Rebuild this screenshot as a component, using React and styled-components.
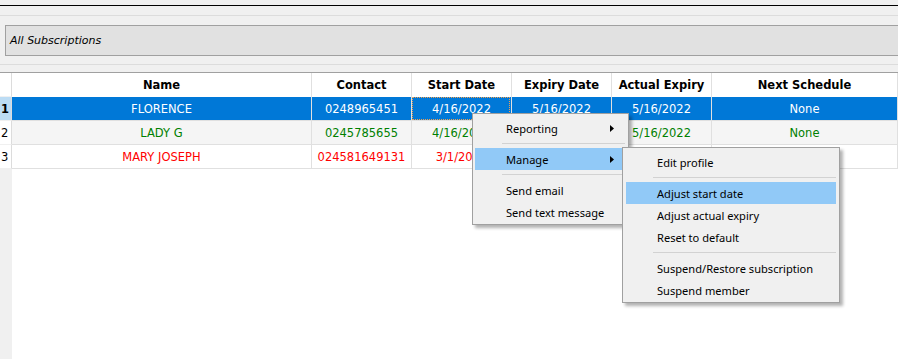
import React from "react";
import styled, { createGlobalStyle, css } from "styled-components";

const Global = createGlobalStyle`
  html, body {
    margin: 0;
    background: #f0f0f0;
  }
`;

const columns = [
  { key: "name", label: "Name" },
  { key: "contact", label: "Contact" },
  { key: "start", label: "Start Date" },
  { key: "expiry", label: "Expiry Date" },
  { key: "actual", label: "Actual Expiry" },
  { key: "next", label: "Next Schedule" },
];

const rows = [
  { name: "FLORENCE", contact: "0248965451", start: "4/16/2022", expiry: "5/16/2022", actual: "5/16/2022", next: "None", tone: "selected" },
  { name: "LADY G", contact: "0245785655", start: "4/16/2022", expiry: "5/16/2022", actual: "5/16/2022", next: "None", tone: "green" },
  { name: "MARY JOSEPH", contact: "024581649131", start: "3/1/2022", expiry: "4/1/2022", actual: "4/1/2022", next: "None", tone: "red" },
];

const toneColor = { selected: "#ffffff", green: "#008000", red: "#ff0000" };

const Page = styled.div`
  position: relative;
  width: 898px;
  height: 359px;
  overflow: hidden;
  display: flex;
  flex-direction: column;
  background: #f0f0f0;
`;

const TopRule = styled.div`
  height: 5px;
  border-bottom: 1px solid #000;
`;

const Band = styled.div`
  height: 9px;
  border-bottom: 1px solid #dcdcdc;
`;

const CaptionArea = styled.div`
  padding: 9px 0 8px 5px;
  border-bottom: 1px solid #dcdcdc;
`;

const CaptionBox = styled.div`
  height: 31px;
  box-sizing: border-box;
  border: 1px solid #a0a0a0;
  border-right: none;
  background: #e1e1e1;
  display: flex;
  align-items: center;
  padding-left: 4px;
  font-family: "DejaVu Sans", sans-serif;
  font-style: italic;
  font-size: 11px;
  color: #000;
`;

const GridGap = styled.div`
  height: 7px;
  border-bottom: 1px solid #a0a0a0;
`;

const Grid = styled.div`
  flex: 1;
  display: grid;
  grid-template-columns: 12px 300px 100px 100px 100px 100px 1fr;
  grid-auto-rows: 24px;
  align-content: start;
  background: linear-gradient(to right, #f0f0f0 12px, #ffffff 12px);
  font-family: "DejaVu Sans", sans-serif;
  font-size: 11.5px;
`;

const Cell = styled.div`
  box-sizing: border-box;
  position: relative;
  display: flex;
  align-items: center;
  justify-content: center;
  white-space: nowrap;
  overflow: hidden;
  border-right: 1px solid #e0e0e0;
  border-bottom: 1px solid #e0e0e0;
  background: ${(p) => (p.$tone === "selected" ? "#0078d7" : p.$tone === "green" ? "#f5f5f5" : "#ffffff")};
  color: ${(p) => toneColor[p.$tone] || "#000"};
  ${(p) =>
    p.$focus &&
    css`
      &::after {
        content: "";
        position: absolute;
        inset: 0 1px 0 0;
        border: 1px dotted #f0a050;
      }
    `}
`;

const HeadCell = styled(Cell)`
  background: #ffffff;
  color: #000;
  font-weight: bold;
  border-bottom: none;
`;

const RowHead = styled.div`
  box-sizing: border-box;
  display: flex;
  align-items: center;
  padding-left: 1px;
  border-right: 1px solid #dcdcdc;
  border-bottom: 1px solid #f0f0f0;
  background: ${(p) => (p.$active ? "#bcdcf4" : "#ffffff")};
  font-weight: ${(p) => (p.$active ? "bold" : "normal")};
  color: #000;
`;

const Menu = styled.div`
  position: absolute;
  left: ${(p) => p.$x}px;
  top: ${(p) => p.$y}px;
  width: ${(p) => p.$w}px;
  box-sizing: border-box;
  padding: 3px 0 1px;
  background: #f0f0f0;
  border: 1px solid #a0a0a0;
  box-shadow: 3px 3px 3px rgba(0, 0, 0, 0.3);
  font-family: "Noto Sans", "Open Sans", sans-serif;
  font-size: 11.1px;
  color: #000;
`;

const Item = styled.div`
  height: 22px;
  margin: 0 ${(p) => p.$inset}px;
  padding-left: 31px;
  padding-right: 12px;
  display: flex;
  align-items: center;
  justify-content: space-between;
  background: ${(p) => (p.$hot ? "#91c9f7" : "transparent")};
`;

const Separator = styled.div`
  height: 9px;
  display: flex;
  align-items: center;
  margin: 0 ${(p) => p.$right}px 0 ${(p) => p.$left}px;
  &::before {
    content: "";
    flex: 1;
    height: 1px;
    background: #d2d2d2;
  }
`;

const Arrow = () => (
  <svg width="4" height="7" viewBox="0 0 4 7">
    <path d="M0 0 L4 3.5 L0 7 Z" fill="#000" />
  </svg>
);

export default function App() {
  return (
    <Page>
      <Global />
      <TopRule />
      <Band />
      <CaptionArea>
        <CaptionBox>All Subscriptions</CaptionBox>
      </CaptionArea>
      <GridGap />
      <Grid>
        <RowHead />
        {columns.map((c) => (
          <HeadCell key={c.key}>{c.label}</HeadCell>
        ))}
        {rows.map((r, i) => (
          <React.Fragment key={r.name}>
            <RowHead $active={r.tone === "selected"}>{i + 1}</RowHead>
            {columns.map((c) => (
              <Cell key={c.key} $tone={r.tone} $focus={r.tone === "selected" && c.key === "start"}>
                {r[c.key]}
              </Cell>
            ))}
          </React.Fragment>
        ))}
      </Grid>

      <Menu $x={472} $y={113} $w={157}>
        <Item $inset={2}>
          Reporting <Arrow />
        </Item>
        <Separator $left={29} $right={3} />
        <Item $inset={2} $hot>
          Manage <Arrow />
        </Item>
        <Separator $left={29} $right={3} />
        <Item $inset={2}>Send email</Item>
        <Item $inset={2}>Send text message</Item>
      </Menu>

      <Menu $x={622} $y={147} $w={218}>
        <Item $inset={3}>Edit profile</Item>
        <Separator $left={30} $right={3} />
        <Item $inset={3} $hot>Adjust start date</Item>
        <Item $inset={3}>Adjust actual expiry</Item>
        <Item $inset={3}>Reset to default</Item>
        <Separator $left={30} $right={3} />
        <Item $inset={3}>Suspend/Restore subscription</Item>
        <Item $inset={3}>Suspend member</Item>
      </Menu>
    </Page>
  );
}
